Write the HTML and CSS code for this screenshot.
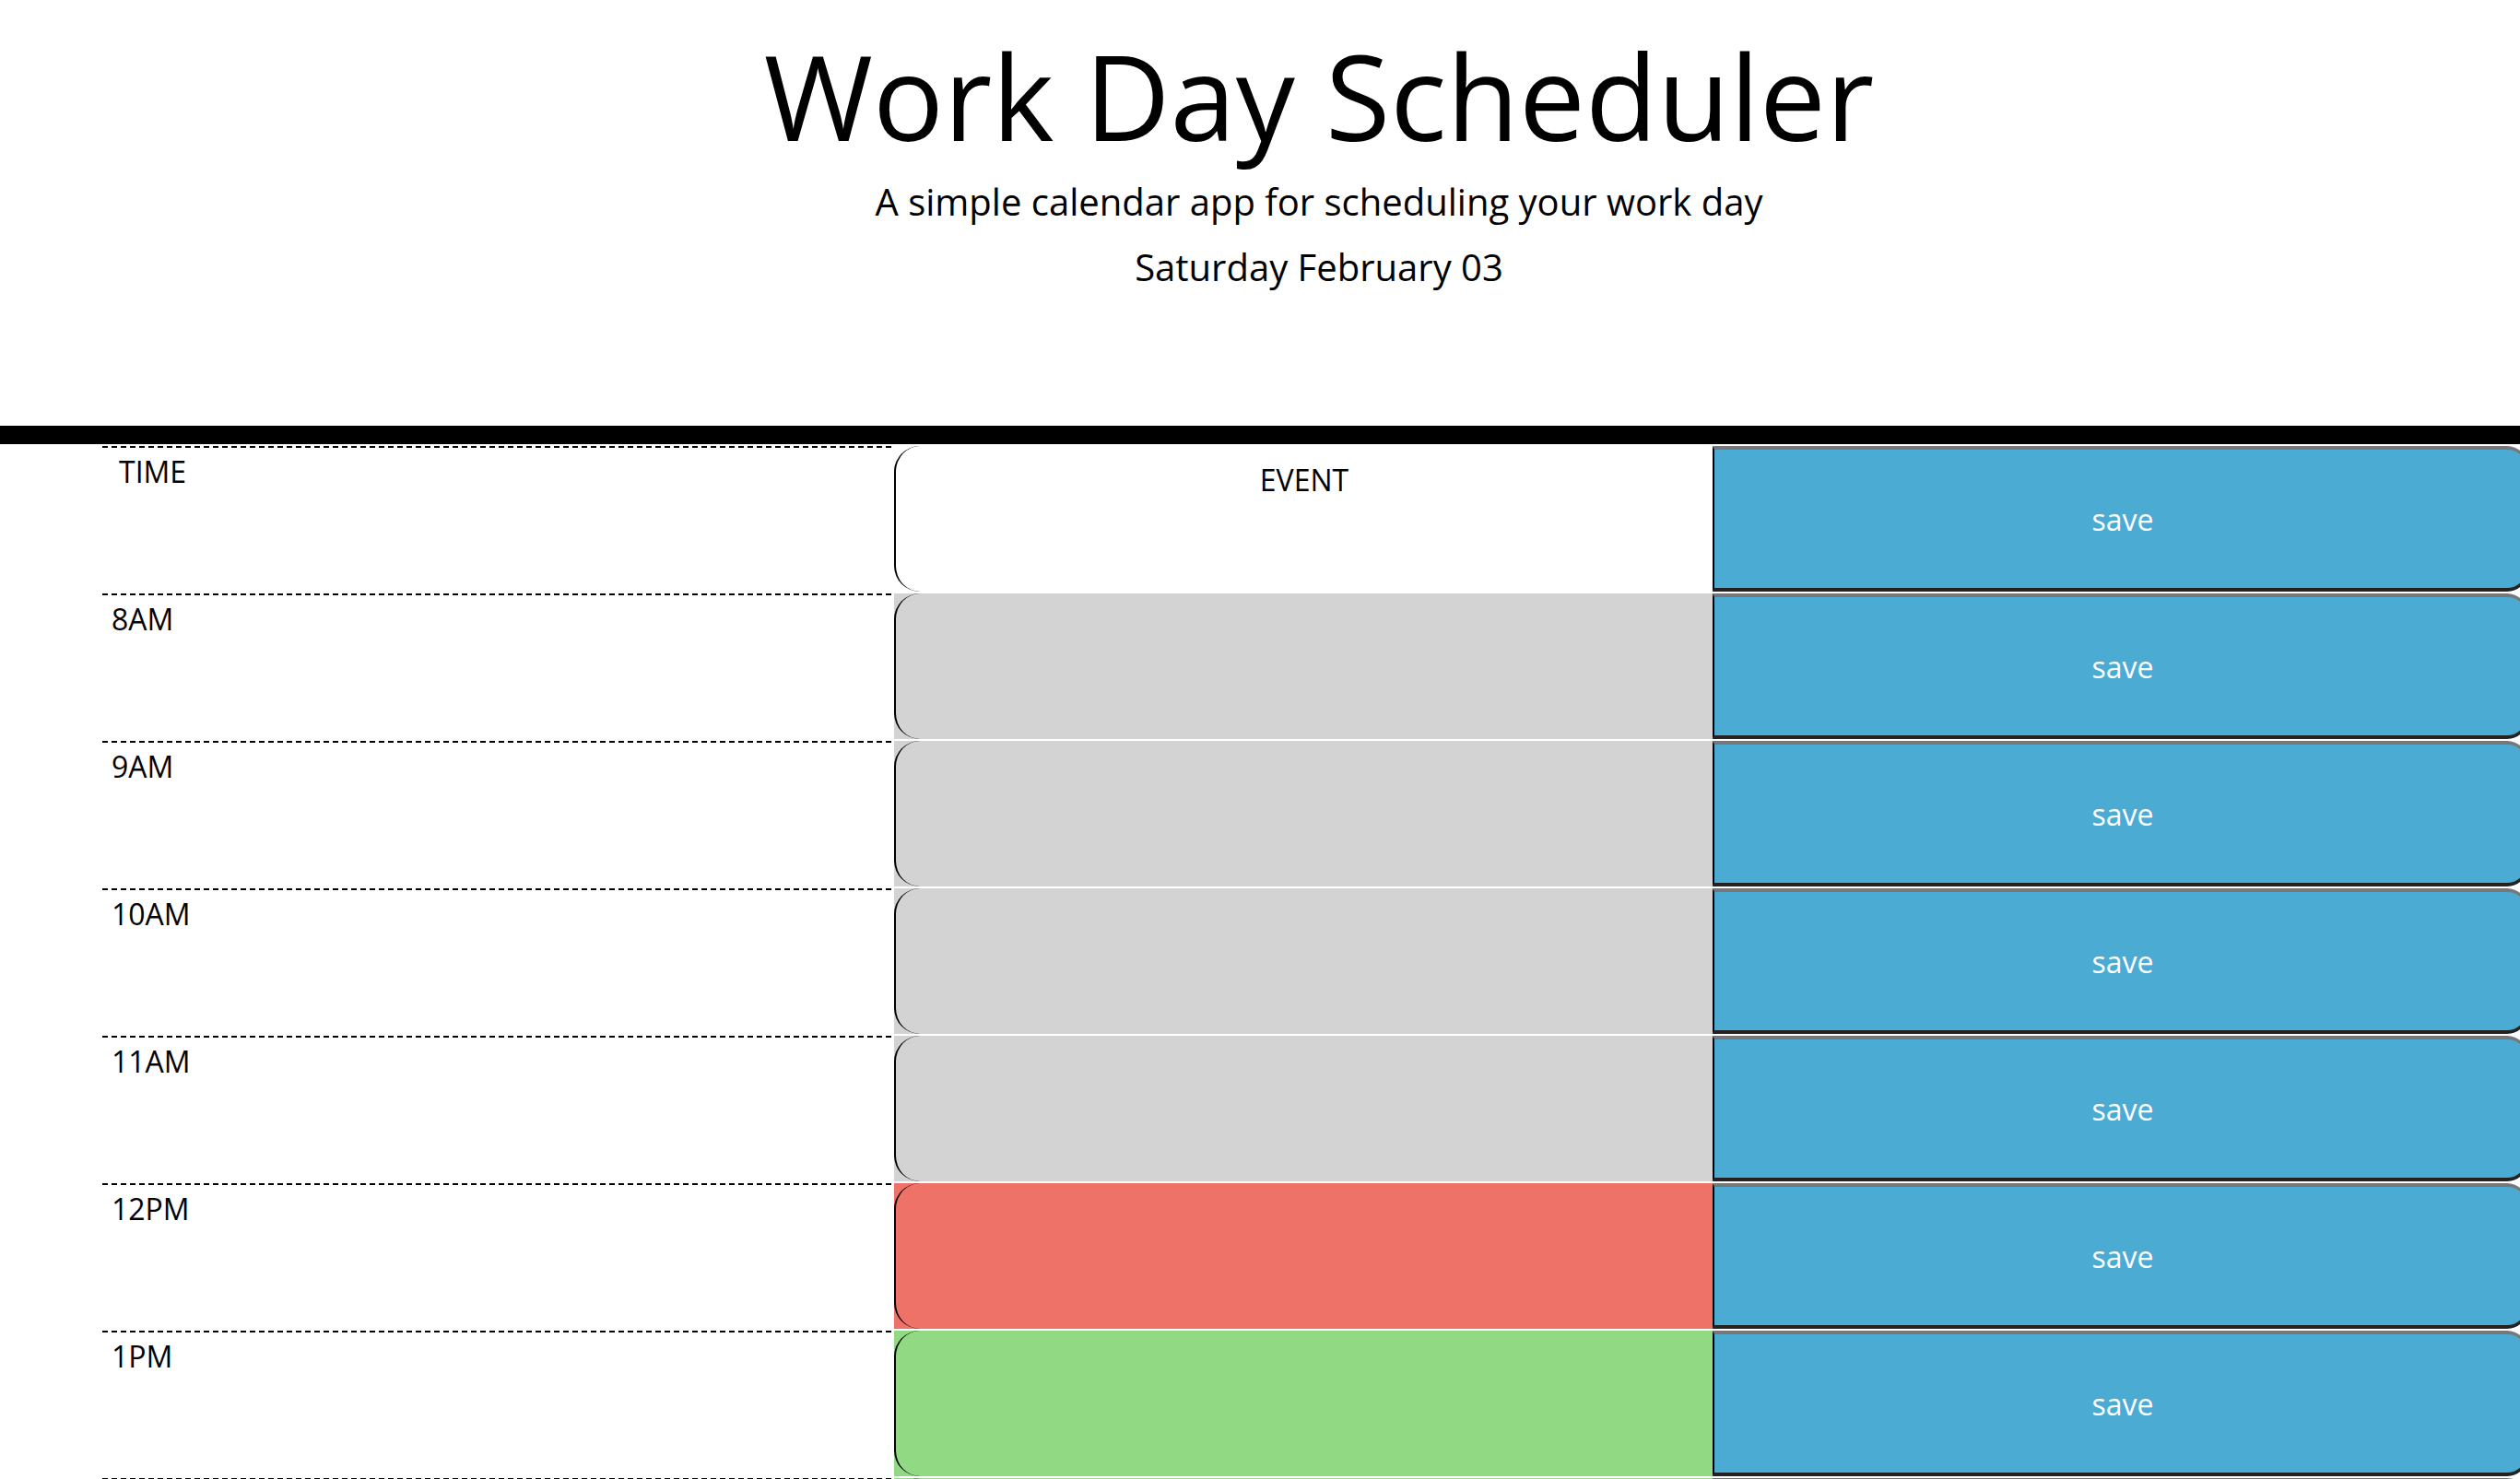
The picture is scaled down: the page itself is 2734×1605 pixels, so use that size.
FILE: index.html
```html
<!DOCTYPE html>
<html lang="en">
<head>
<meta charset="utf-8">
<title>Work Day Scheduler</title>
<link rel="stylesheet" href="styles.css">
</head>
<body>
<header class="jumbotron">
  <h1 class="title">Work Day Scheduler</h1>
  <p class="lead">A simple calendar app for scheduling your work day</p>
  <p class="date">Saturday February 03</p>
</header>
<main class="schedule">
  <div class="row">
    <div class="hour hour-head">TIME</div>
    <div class="cell head"><div class="desc desc-head">EVENT</div></div>
    <button class="save">save</button>
  </div>
  <div class="row">
    <div class="hour">8AM</div>
    <div class="cell past"><div class="desc"></div></div>
    <button class="save">save</button>
  </div>
  <div class="row">
    <div class="hour">9AM</div>
    <div class="cell past"><div class="desc"></div></div>
    <button class="save">save</button>
  </div>
  <div class="row">
    <div class="hour">10AM</div>
    <div class="cell past"><div class="desc"></div></div>
    <button class="save">save</button>
  </div>
  <div class="row">
    <div class="hour">11AM</div>
    <div class="cell past"><div class="desc"></div></div>
    <button class="save">save</button>
  </div>
  <div class="row">
    <div class="hour">12PM</div>
    <div class="cell present"><div class="desc"></div></div>
    <button class="save">save</button>
  </div>
  <div class="row">
    <div class="hour">1PM</div>
    <div class="cell future"><div class="desc"></div></div>
    <button class="save">save</button>
  </div>
  <div class="row">
    <div class="hour">2PM</div>
    <div class="cell future"><div class="desc"></div></div>
    <button class="save">save</button>
  </div>
  <div class="row">
    <div class="hour">3PM</div>
    <div class="cell future"><div class="desc"></div></div>
    <button class="save">save</button>
  </div>
</main>
</body>
</html>
```
FILE: styles.css
```css
html, body {
  margin: 0;
  padding: 0;
  overflow: hidden;
}

body {
  font-family: "Open Sans", "DejaVu Sans", sans-serif;
  color: #000;
  background: #fff;
}

.jumbotron {
  height: 433px;
  padding: 29px 0 0 128px;
  border-bottom: 20px solid #000;
  display: flex;
  flex-direction: column;
  align-items: center;
  text-align: center;
}

.title {
  margin: 0;
  font-size: 128px;
  line-height: 150px;
  font-weight: 400;
}

.lead {
  margin: 15px 0 0;
  font-size: 40px;
  line-height: 50px;
}

.date {
  margin: 21px 0 0;
  font-size: 40px;
  line-height: 50px;
}

.schedule {
  margin-top: 2px;
  display: flex;
  flex-direction: column;
}

.row {
  display: grid;
  grid-template-columns: 859px 888px 884px;
  height: 160px;
  margin-left: 111px;
}

.hour {
  height: 160px;
  font-size: 32px;
  line-height: 45px;
  padding: 5px 0 0 10px;
  box-sizing: border-box;
  background-image: repeating-linear-gradient(to right, #000 0 6px, transparent 6px 10px);
  background-size: 100% 2px;
  background-repeat: no-repeat;
  background-position: 0 0;
}

.hour-head {
  padding: 5px 0 0 18px;
}

.cell {
  height: 158px;
}

.head { background: #fff; }
.past { background: #d3d3d3; }
.present { background: #ee7268; }
.future { background: #92d984; }

.desc {
  height: 100%;
  box-sizing: border-box;
  border-left: 2px solid #000;
  border-radius: 28px 0 0 28px;
}

.desc-head {
  font-size: 32px;
  line-height: 45px;
  text-align: center;
  padding-top: 14px;
}

.save {
  height: 158px;
  margin: 0;
  padding: 0 0 0 6px;
  background: #4cabd2;
  color: #fff;
  font-family: "Open Sans", "DejaVu Sans", sans-serif;
  font-size: 32px;
  border-style: solid;
  border-width: 4px 2px 4px 2px;
  border-color: #777 #222 #222 #000;
  border-radius: 0 22px 22px 0;
}
```
